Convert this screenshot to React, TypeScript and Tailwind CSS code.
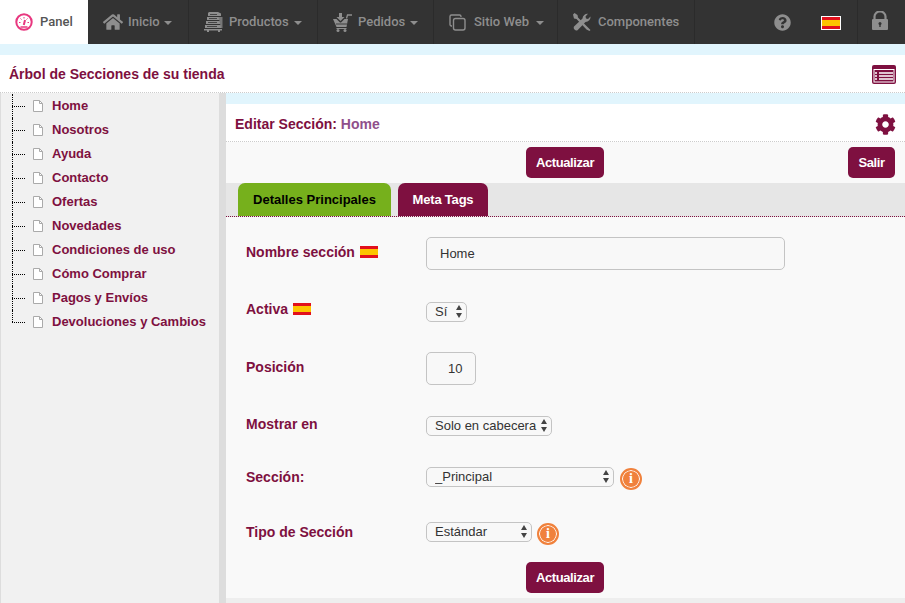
import type { FC, ReactNode } from "react";
import { FaCog, FaHome, FaQuestionCircle } from "react-icons/fa";

const SECTIONS = [
  "Home",
  "Nosotros",
  "Ayuda",
  "Contacto",
  "Ofertas",
  "Novedades",
  "Condiciones de uso",
  "Cómo Comprar",
  "Pagos y Envíos",
  "Devoluciones y Cambios",
];

const Caret = () => <span className="-ml-[1px] mt-[2px] h-0 w-0 border-x-[4px] border-t-[4px] border-x-transparent border-t-[#8e8e8e]" />;

const Flag = ({ border = false }: { border?: boolean }) => (
  <span className={`flex h-[12px] w-[18px] shrink-0 flex-col ${border ? "box-content border border-white" : ""}`}>
    <span className="h-[3px] bg-[#e2101c]" />
    <span className="h-[6px] bg-[#fdc400]" />
    <span className="h-[3px] bg-[#e2101c]" />
  </span>
);

const StackIcon = () => (
  <svg width="19" height="20" viewBox="0 0 19 20" fill="#8e8e8e">
    <path d="M5 0h9l3 1.500V4H4V1z" />
    <path d="M3 5h14v3H3z" />
    <path d="M2 9h15v3H2z" />
    <path d="M1 13h16v3H1z" />
    <path d="M0 17h18v1.500H16V20h-2v-1.500H5V20H3v-1.500H0z" />
    <path d="M14.500 5h4v11h-1.500z" fill="#777" />
    <path d="M6 2.500h7M5 6.500h8M4 10.500h9M3 14.500h10" stroke="#333" strokeWidth=".8" />
  </svg>
);

const CartIcon = () => (
  <svg width="19" height="19" viewBox="0 0 19 19" fill="#8e8e8e">
    <path d="M6 0h3v4h2.500L7.500 8 3.500 4H6z" />
    <path d="M0 6h3.500l3.500 3.500h1L11.500 6H15l-1.500 8h-10z" />
    <path d="M13.500 5.500 14.500 2H19" fill="none" stroke="#8e8e8e" strokeWidth="1.300" />
    <path d="M3 11h11" stroke="#333" strokeWidth=".9" />
    <path d="M3.500 15.500h10" stroke="#8e8e8e" strokeWidth="1" />
    <circle cx="5" cy="17.500" r="1.500" />
    <circle cx="12" cy="17.500" r="1.500" />
  </svg>
);

const PagesIcon = () => (
  <svg width="17" height="17" viewBox="0 0 17 17" fill="none" stroke="#8e8e8e" strokeWidth="1.400">
    <rect x="4.500" y="4.500" width="11.500" height="11.500" rx="2" />
    <path d="M3 12H2.500A1.500 1.500 0 0 1 1 10.500V2.500A1.500 1.500 0 0 1 2.500 1h8A1.500 1.500 0 0 1 12 2.500V3" />
  </svg>
);

const ToolsIcon = () => (
  <svg width="18" height="18" viewBox="0 0 18 18" fill="#8e8e8e">
    <path d="M1.500 0 4.500 2 5 4.500 15 14.500 17.500 17l-1 1-3-1.500L3.500 6 1 5.500 0 1.500z" />
    <path d="M17.500 3.500 15 6l-2-.5-.5-2L15 .8A5 5 0 0 0 9.500 5.500L1 13.500a2.800 2.800 0 0 0 3.500 3.800L12.500 9A5 5 0 0 0 17.500 3.500z" />
  </svg>
);

const LockIcon = () => (
  <svg width="16" height="19" viewBox="0 0 16 19" fill="#8e8e8e">
    <path d="M2.500 9V5.500a5.500 5 0 0 1 11 0V9" fill="none" stroke="#8e8e8e" strokeWidth="2.200" />
    <path d="M1 8h14a1 1 0 0 1 1 1v9a1 1 0 0 1-1 1H1a1 1 0 0 1-1-1V9a1 1 0 0 1 1-1z" />
    <circle cx="8" cy="12.500" r="1.500" fill="#333" />
    <path d="M7.300 13h1.400v3H7.300z" fill="#333" />
  </svg>
);

const GaugeIcon = () => (
  <svg width="18" height="18" viewBox="0 0 18 18" fill="none" stroke="#e8377f">
    <circle cx="9" cy="9" r="7.700" strokeWidth="2" />
    <path d="M4 9.500h1.500M12.500 9.500H14M5.500 5.500l1 1M12.500 5.500l-1 1M9 4v1.500" strokeWidth="1" />
    <path d="M10 7 8.800 12" strokeWidth="2" />
    <path d="M5.500 14h7" strokeWidth="1.500" />
  </svg>
);

const ListIcon = () => (
  <svg width="24" height="19" viewBox="0 0 24 19">
    <rect width="24" height="19" rx="2" fill="#7e1040" />
    <rect x="2" y="4.500" width="20" height="12.500" fill="none" stroke="#fff" strokeWidth="1" />
    <path d="M3 8h2M7 8h14M3 11h2M7 11h14M3 14h2M7 14h14" stroke="#fff" strokeWidth="1.500" />
  </svg>
);

const FileIcon = () => (
  <svg width="10" height="12" viewBox="0 0 10 12" fill="#fff" stroke="#aaa" className="shrink-0">
    <path d="M.5.500h6l3 3v8H.5z" />
    <path d="M6.500.500v3h3" fill="none" />
  </svg>
);

const InfoIcon = ({ gap }: { gap: string }) => (
  <span className={`${gap} mt-[1px] flex h-[22px] w-[22px] shrink-0 items-center justify-center rounded-full border-2 border-[#f0813c] bg-[#f0813c] font-['Liberation_Serif',serif] text-[14px] font-bold leading-none text-white shadow-[inset_0_0_0_1px_#fff]`}>
    i
  </span>
);

const NavItem: FC<{ icon: ReactNode; label: string; width: string; gap?: string; caret?: boolean }> = ({
  icon,
  label,
  width,
  gap = "gap-[6px]",
  caret = true,
}) => (
  <div className={`flex h-full shrink-0 items-center border-r border-[#2b2b2b] pl-[15px] ${gap} ${width}`}>
    {icon}
    <span>{label}</span>
    {caret && <Caret />}
  </div>
);

const SubmitButton = () => (
  <button className="h-[31px] w-[78px] rounded-[5px] bg-[#7e1040] text-[13px] font-bold tracking-[-0.4px] text-white">Actualizar</button>
);

const NativeSelect: FC<{ value: string; width: string }> = ({ value, width }) => (
  <div className={`relative h-[20px] ${width}`}>
    <select
      defaultValue={value}
      className="block h-full w-full appearance-none rounded-[5px] border border-[#c4c4c4] bg-[#f8f8f8] pl-[8px] text-[13px] leading-[18px] text-[#333]"
    >
      <option>{value}</option>
    </select>
    <span className="pointer-events-none absolute right-[5px] top-[3px] flex flex-col gap-[3px]">
      <span className="h-0 w-0 border-x-[3px] border-b-[5px] border-x-transparent border-b-[#444]" />
      <span className="h-0 w-0 border-x-[3px] border-t-[5px] border-x-transparent border-t-[#444]" />
    </span>
  </div>
);

const FieldLabel: FC<{ text: string; flag?: boolean; top: string }> = ({ text, flag, top }) => (
  <div className={`flex w-[180px] shrink-0 items-center gap-[5px] self-start text-[14px] font-bold leading-[16px] text-[#7e1040] ${top}`}>
    <span>{text}</span>
    {flag && <Flag />}
  </div>
);

export default function App() {
  return (
    <div className="flex h-[603px] w-[905px] flex-col overflow-hidden bg-white font-['Liberation_Sans',Arial,sans-serif]">
      <nav className="flex h-[44px] shrink-0 bg-[#333] font-['Roboto',sans-serif] text-[13px] font-medium text-[#8e8e8e]">
        <div className="flex h-full w-[88px] shrink-0 items-center gap-[7px] bg-white pl-[15px] text-[#555]">
          <GaugeIcon />
          <span>Panel</span>
        </div>
        <NavItem icon={<FaHome size={20} color="#8e8e8e" />} label="Inicio" width="w-[101px]" gap="gap-[5px]" />
        <NavItem icon={<StackIcon />} label="Productos" width="w-[129px]" />
        <NavItem icon={<CartIcon />} label="Pedidos" width="w-[116px]" />
        <NavItem icon={<PagesIcon />} label="Sitio Web" width="w-[124px]" gap="gap-[8px]" />
        <NavItem icon={<ToolsIcon />} label="Componentes" width="w-[137px]" gap="gap-[7px]" caret={false} />
        <div className="flex h-full w-[163px] shrink-0 items-center border-r border-[#2b2b2b] pl-[79px]">
          <FaQuestionCircle size={17} color="#8e8e8e" />
          <span className="ml-[30px] mt-[2px]">
            <Flag border />
          </span>
        </div>
        <div className="flex flex-1 items-center pb-[3px] pl-[14px]">
          <LockIcon />
        </div>
      </nav>

      <div className="h-[11px] shrink-0 bg-[#e1f5fd]" />

      <header className="flex h-[38px] shrink-0 items-center justify-between border-b border-dotted border-[#ccc] px-[9px] pt-[1px] text-[14px] font-bold text-[#7e1040]">
        <h1>Árbol de Secciones de su tienda</h1>
        <ListIcon />
      </header>

      <div className="flex min-h-0 flex-1">
        <aside className="w-[226px] shrink-0 border-l border-r-[7px] border-[#ddd] bg-[#f1f1f1] pt-px">
          <ul className="ml-[11px] text-[13px] font-bold text-[#7e1040]">
            {SECTIONS.map((name, i) => (
              <li key={name} className="relative flex h-[24px] items-center">
                <span className={`absolute left-0 top-0 border-l border-dotted border-black ${i === SECTIONS.length - 1 ? "h-[12px]" : "h-[24px]"}`} />
                <span className="w-[13px] shrink-0 border-t border-dotted border-black" />
                <span className="ml-[8px] flex items-center gap-[9px] whitespace-nowrap">
                  <FileIcon />
                  {name}
                </span>
              </li>
            ))}
          </ul>
        </aside>

        <main className="min-w-0 flex-1">
          <div className="h-[11px] bg-[#e1f5fd]" />
          <div className="flex h-[38px] items-center justify-between border-b border-dotted border-[#ccc] px-[9px] pt-[3px] text-[14px] font-bold text-[#7e1040]">
            <h2>
              Editar Sección: <span className="text-[#8f4f8b]">Home</span>
            </h2>
            <FaCog size={21} color="#7e1040" />
          </div>
          <div className="flex h-[41px] items-center bg-[#f9f9f9] pr-[10px]">
            <div className="ml-[300px]">
              <SubmitButton />
            </div>
            <button className="ml-auto h-[31px] w-[47px] rounded-[5px] bg-[#7e1040] text-[13px] font-bold tracking-[-0.4px] text-white">Salir</button>
          </div>
          <div className="flex h-[34px] gap-[7px] border-b border-dotted border-[#7e1040] bg-[#e6e6e6] pl-[12px] text-[13px] font-bold">
            <div className="flex w-[153px] items-center justify-center rounded-t-[7px] bg-[#76b01c] pt-[1px] text-black">Detalles Principales</div>
            <div className="flex w-[90px] items-center justify-center rounded-t-[7px] bg-[#7e1040] pt-[1px] tracking-[-0.2px] text-white">Meta Tags</div>
          </div>

          <form className="h-[381px] bg-[#f9f9f9] pl-[20px] pt-[20px]">
            <div className="flex">
              <FieldLabel text="Nombre sección" flag top="mt-[7px]" />
              <input
                defaultValue="Home"
                className="h-[33px] w-[359px] rounded-[5px] border border-[#c4c4c4] bg-[#f8f8f8] pl-[13px] text-[13px] text-[#333]"
              />
            </div>
            <div className="mt-[32px] flex h-[20px]">
              <FieldLabel text="Activa" flag top="-mt-[1px]" />
              <NativeSelect value="Sí" width="w-[41px]" />
            </div>
            <div className="mt-[30px] flex">
              <FieldLabel text="Posición" top="mt-[7px]" />
              <input
                defaultValue="10"
                className="h-[33px] w-[50px] rounded-[5px] border border-[#c4c4c4] bg-[#f8f8f8] pl-[21px] text-[13px] text-[#333]"
              />
            </div>
            <div className="mt-[31px] flex h-[20px]">
              <FieldLabel text="Mostrar en" top="" />
              <NativeSelect value="Solo en cabecera" width="w-[126px]" />
            </div>
            <div className="mt-[31px] flex h-[20px]">
              <FieldLabel text="Sección:" top="mt-[2px]" />
              <NativeSelect value="_Principal" width="w-[188px]" />
              <InfoIcon gap="ml-[6px]" />
            </div>
            <div className="mt-[35px] flex h-[20px]">
              <FieldLabel text="Tipo de Sección" top="mt-[2px]" />
              <NativeSelect value="Estándar" width="w-[106px]" />
              <InfoIcon gap="ml-[5px]" />
            </div>
            <div className="ml-[280px] mt-[20px]">
              <SubmitButton />
            </div>
          </form>
          <div className="h-[5px] bg-[#eee]" />
        </main>
      </div>
    </div>
  );
}
